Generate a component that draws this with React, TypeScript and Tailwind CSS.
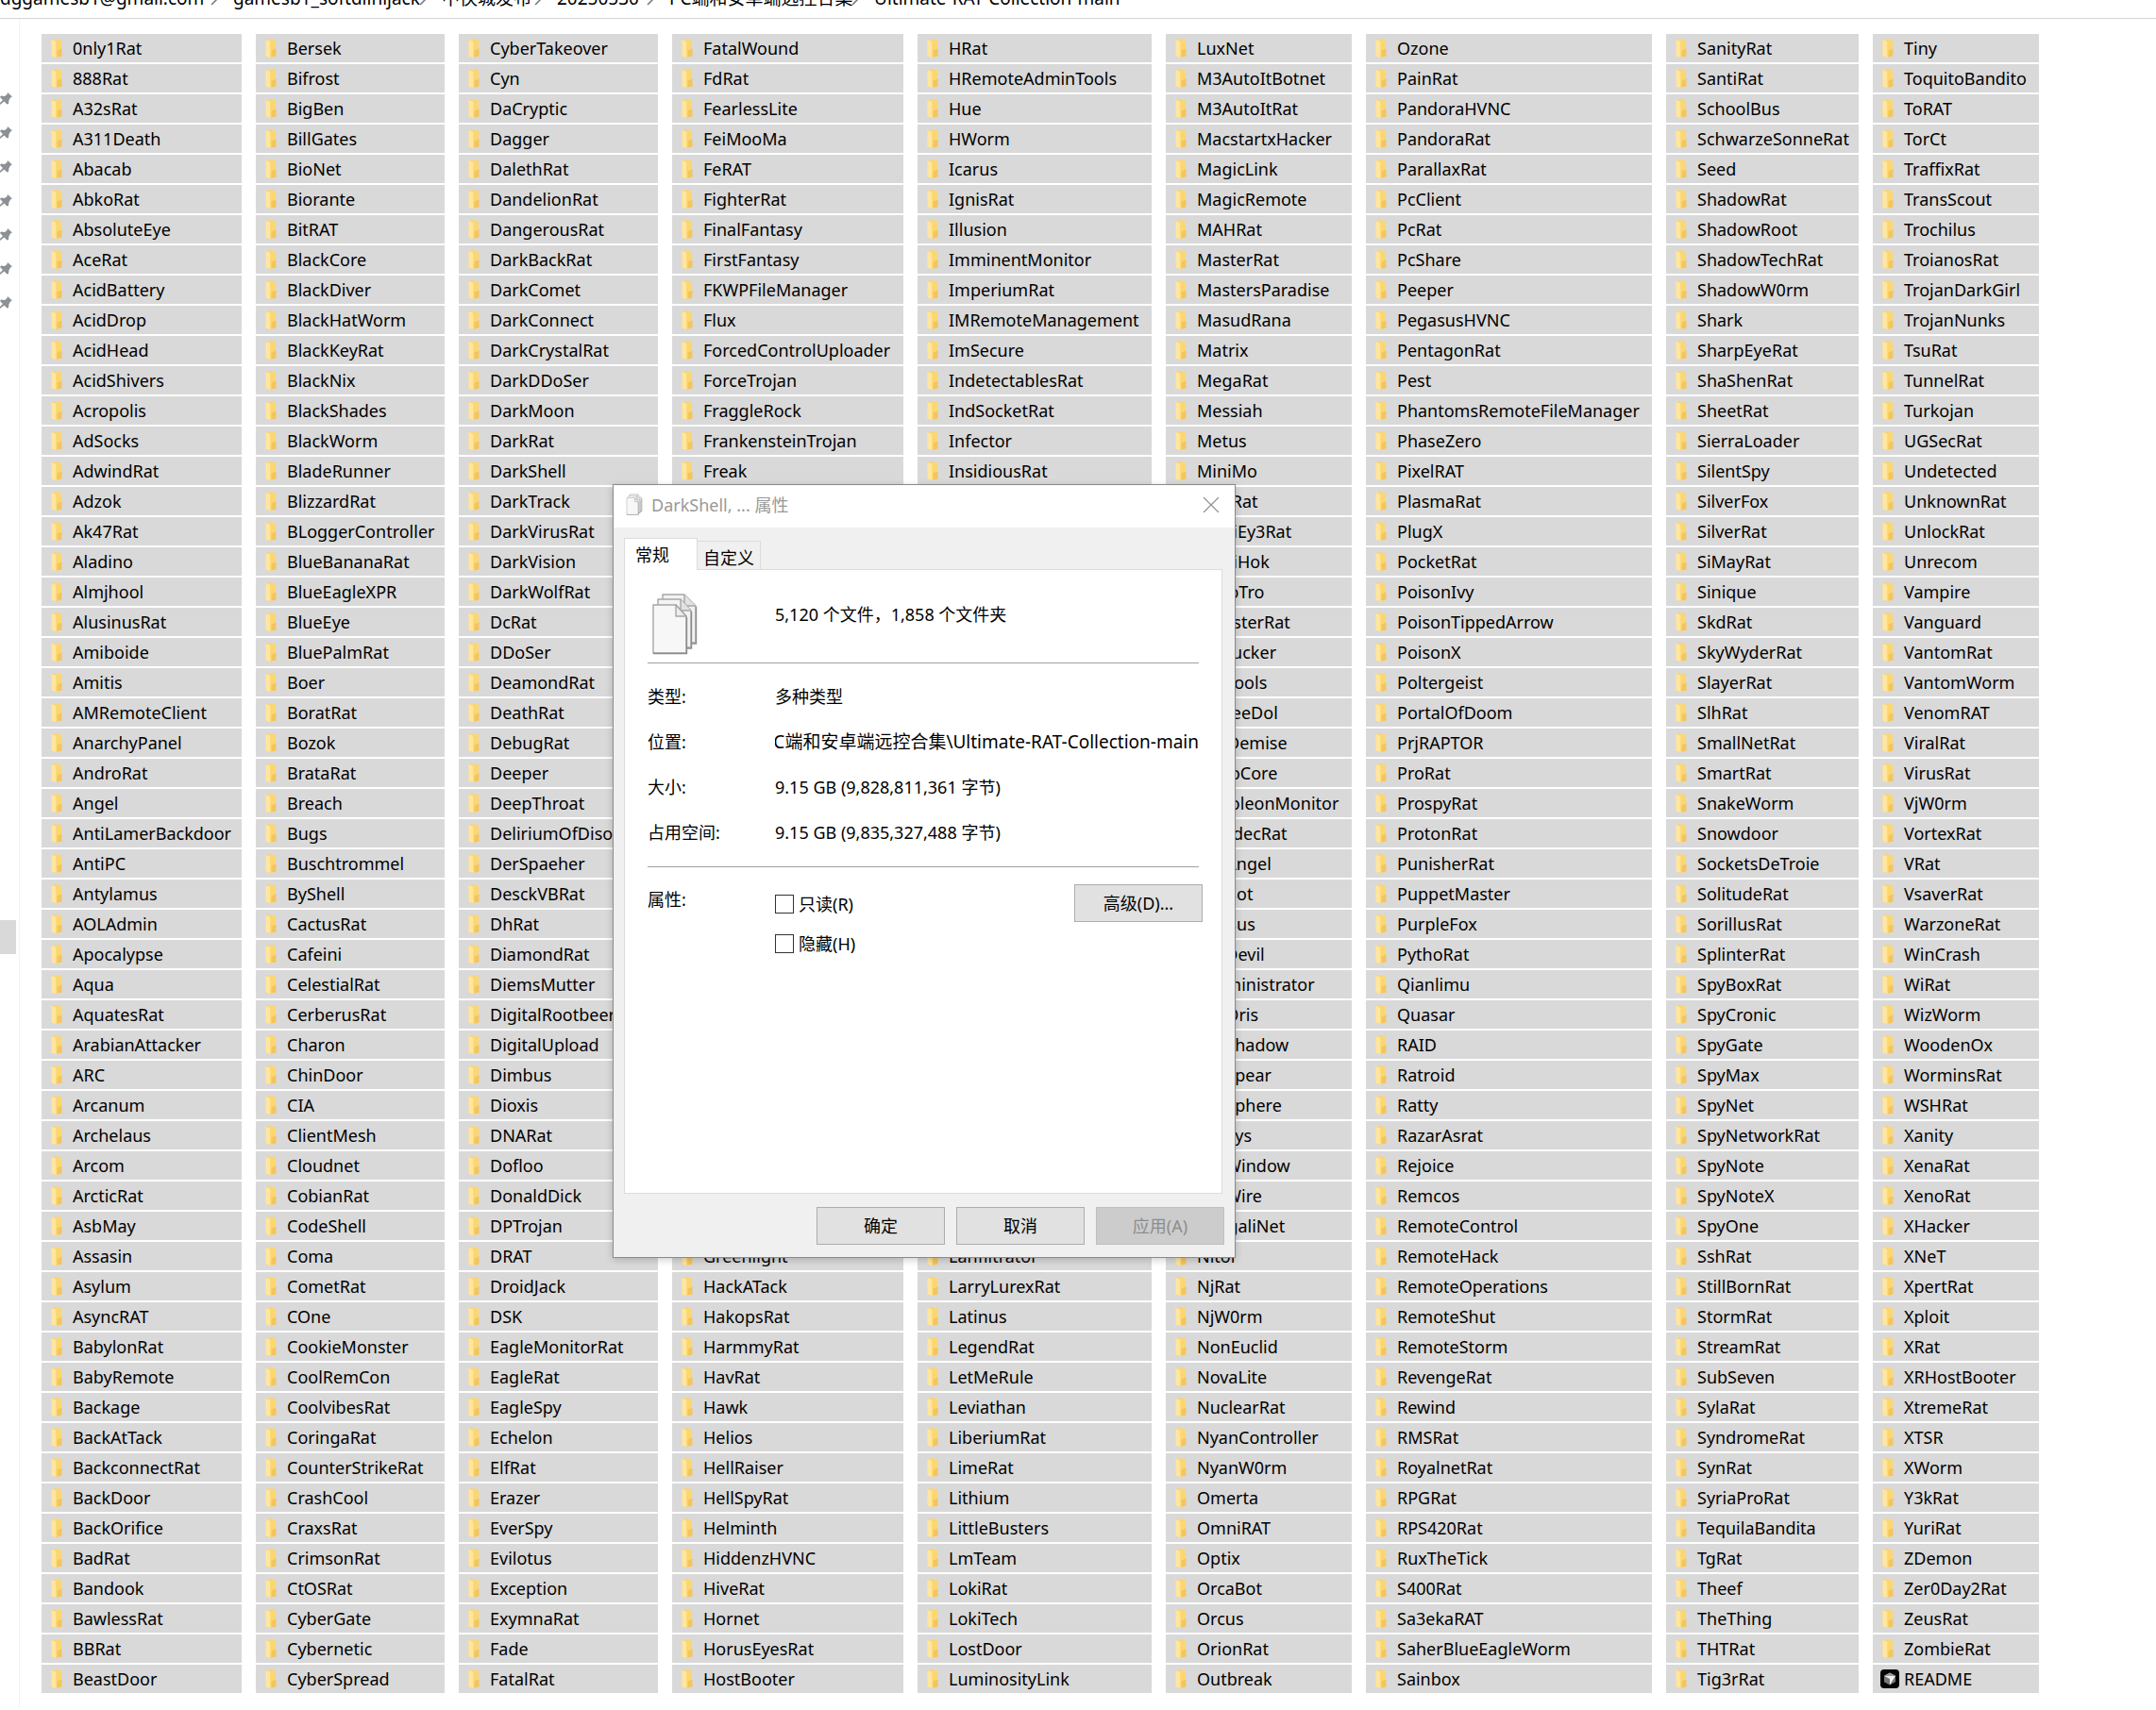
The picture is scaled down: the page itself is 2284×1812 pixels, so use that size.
import React from "react";

// Rows that sit completely behind the properties window carry no label
const covered = Array(25).fill("");

const columns = [
  {
    width: "w-[212px]",
    names:
      "0nly1Rat 888Rat A32sRat A311Death Abacab AbkoRat AbsoluteEye AceRat AcidBattery AcidDrop AcidHead AcidShivers Acropolis AdSocks AdwindRat Adzok Ak47Rat Aladino Almjhool AlusinusRat Amiboide Amitis AMRemoteClient AnarchyPanel AndroRat Angel AntiLamerBackdoor AntiPC Antylamus AOLAdmin Apocalypse Aqua AquatesRat ArabianAttacker ARC Arcanum Archelaus Arcom ArcticRat AsbMay Assasin Asylum AsyncRAT BabylonRat BabyRemote Backage BackAtTack BackconnectRat BackDoor BackOrifice BadRat Bandook BawlessRat BBRat BeastDoor".split(" "),
  },
  {
    width: "w-[200px]",
    names:
      "Bersek Bifrost BigBen BillGates BioNet Biorante BitRAT BlackCore BlackDiver BlackHatWorm BlackKeyRat BlackNix BlackShades BlackWorm BladeRunner BlizzardRat BLoggerController BlueBananaRat BlueEagleXPR BlueEye BluePalmRat Boer BoratRat Bozok BrataRat Breach Bugs Buschtrommel ByShell CactusRat Cafeini CelestialRat CerberusRat Charon ChinDoor CIA ClientMesh Cloudnet CobianRat CodeShell Coma CometRat COne CookieMonster CoolRemCon CoolvibesRat CoringaRat CounterStrikeRat CrashCool CraxsRat CrimsonRat CtOSRat CyberGate Cybernetic CyberSpread".split(" "),
  },
  {
    width: "w-[211px]",
    names:
      "CyberTakeover Cyn DaCryptic Dagger DalethRat DandelionRat DangerousRat DarkBackRat DarkComet DarkConnect DarkCrystalRat DarkDDoSer DarkMoon DarkRat DarkShell DarkTrack DarkVirusRat DarkVision DarkWolfRat DcRat DDoSer DeamondRat DeathRat DebugRat Deeper DeepThroat DeliriumOfDisorder DerSpaeher DesckVBRat DhRat DiamondRat DiemsMutter DigitalRootbeer DigitalUpload Dimbus Dioxis DNARat Dofloo DonaldDick DPTrojan DRAT DroidJack DSK EagleMonitorRat EagleRat EagleSpy Echelon ElfRat Erazer EverSpy Evilotus Exception ExymnaRat Fade FatalRat".split(" "),
  },
  {
    width: "w-[245px]",
    names: [
      ..."FatalWound FdRat FearlessLite FeiMooMa FeRAT FighterRat FinalFantasy FirstFantasy FKWPFileManager Flux ForcedControlUploader ForceTrojan FraggleRock FrankensteinTrojan Freak".split(" "),
      ...covered,
      ..."Greenlight HackATack HakopsRat HarmmyRat HavRat Hawk Helios HellRaiser HellSpyRat Helminth HiddenzHVNC HiveRat Hornet HorusEyesRat HostBooter".split(" "),
    ],
  },
  {
    width: "w-[248px]",
    names: [
      ..."HRat HRemoteAdminTools Hue HWorm Icarus IgnisRat Illusion ImminentMonitor ImperiumRat IMRemoteManagement ImSecure IndetectablesRat IndSocketRat Infector InsidiousRat".split(" "),
      ...covered,
      ..."Lanfiltrator LarryLurexRat Latinus LegendRat LetMeRule Leviathan LiberiumRat LimeRat Lithium LittleBusters LmTeam LokiRat LokiTech LostDoor LuminosityLink".split(" "),
    ],
  },
  {
    width: "w-[197px]",
    names:
      "LuxNet M3AutoItBotnet M3AutoItRat MacstartxHacker MagicLink MagicRemote MAHRat MasterRat MastersParadise MasudRana Matrix MegaRat Messiah Metus MiniMo MiniRat ModiEy3Rat ModiHok MofoTro MonsterRat MoSucker MwTools MuFeeDol MytDemise NanoCore NapoleonMonitor NawdecRat NetAngel NetBot NetBus NetDevil Netministrator NetOris NetShadow NetSpear NetSphere NetSys NetWindow NetWire NasgaliNet Nitol NjRat NjW0rm NonEuclid NovaLite NuclearRat NyanController NyanW0rm Omerta OmniRAT Optix OrcaBot Orcus OrionRat Outbreak".split(" "),
  },
  {
    width: "w-[303px]",
    names:
      "Ozone PainRat PandoraHVNC PandoraRat ParallaxRat PcClient PcRat PcShare Peeper PegasusHVNC PentagonRat Pest PhantomsRemoteFileManager PhaseZero PixelRAT PlasmaRat PlugX PocketRat PoisonIvy PoisonTippedArrow PoisonX Poltergeist PortalOfDoom PrjRAPTOR ProRat ProspyRat ProtonRat PunisherRat PuppetMaster PurpleFox PythoRat Qianlimu Quasar RAID Ratroid Ratty RazarAsrat Rejoice Remcos RemoteControl RemoteHack RemoteOperations RemoteShut RemoteStorm RevengeRat Rewind RMSRat RoyalnetRat RPGRat RPS420Rat RuxTheTick S400Rat Sa3ekaRAT SaherBlueEagleWorm Sainbox".split(" "),
  },
  {
    width: "w-[204px]",
    names:
      "SanityRat SantiRat SchoolBus SchwarzeSonneRat Seed ShadowRat ShadowRoot ShadowTechRat ShadowW0rm Shark SharpEyeRat ShaShenRat SheetRat SierraLoader SilentSpy SilverFox SilverRat SiMayRat Sinique SkdRat SkyWyderRat SlayerRat SlhRat SmallNetRat SmartRat SnakeWorm Snowdoor SocketsDeTroie SolitudeRat SorillusRat SplinterRat SpyBoxRat SpyCronic SpyGate SpyMax SpyNet SpyNetworkRat SpyNote SpyNoteX SpyOne SshRat StillBornRat StormRat StreamRat SubSeven SylaRat SyndromeRat SynRat SyriaProRat TequilaBandita TgRat Theef TheThing THTRat Tig3rRat".split(" "),
  },
  {
    width: "w-[176px]",
    names:
      "Tiny ToquitoBandito ToRAT TorCt TraffixRat TransScout Trochilus TroianosRat TrojanDarkGirl TrojanNunks TsuRat TunnelRat Turkojan UGSecRat Undetected UnknownRat UnlockRat Unrecom Vampire Vanguard VantomRat VantomWorm VenomRAT ViralRat VirusRat VjW0rm VortexRat VRat VsaverRat WarzoneRat WinCrash WiRat WizWorm WoodenOx WorminsRat WSHRat Xanity XenaRat XenoRat XHacker XNeT XpertRat Xploit XRat XRHostBooter XtremeRat XTSR XWorm Y3kRat YuriRat ZDemon Zer0Day2Rat ZeusRat ZombieRat README".split(" "),
  },
];

const crumbs = [
  { label: "dggamesb1@gmail.com", width: "w-[247px]" },
  { label: "gamesb1_softdlinijack", width: "w-[221px]" },
  { label: "中侠城发布", width: "w-[122px]" },
  { label: "20250530", width: "w-[119px]" },
  { label: "PC端和安卓端远控合集", width: "w-[217px]" },
  { label: "Ultimate-RAT-Collection-main", width: "w-auto" },
];

const details = [
  { label: "类型:", value: "多种类型" },
  { label: "位置:", value: "PC端和安卓端远控合集\\Ultimate-RAT-Collection-main", path: true },
  { label: "大小:", value: "9.15 GB (9,828,811,361 字节)" },
  { label: "占用空间:", value: "9.15 GB (9,835,327,488 字节)" },
];

const FolderIcon = () => (
  <svg className="h-5 w-5 shrink-0" viewBox="0 0 20 20" aria-hidden="true">
    <path d="M2.5 1 L6 0 L13 1 V18 L8 20 L2.5 18.5Z" fill="#f7d682" />
    <path d="M2.5 1 L7.5 3 V20 L2.5 18.5Z" fill="#ffe6a0" />
    <path d="M7.5 3 L9 1.5 H13 V11 L12.5 12 V18.5 L7.5 20Z" fill="#fcd66f" />
    <path d="M8.5 12.5 L13.5 10.5 V18.5 L8.5 19.5Z" fill="#f3c55f" />
  </svg>
);

const ReadmeIcon = () => (
  <svg className="h-5 w-5 shrink-0" viewBox="0 0 20 20" aria-hidden="true">
    <rect width="20" height="20" rx="4" fill="#050505" />
    <path d="M10 3.5 L16 6.8 V13.2 L10 16.5 L4 13.2 V6.8Z" fill="#777" />
    <path d="M4 6.8 H16 L10 16.5 V10Z" fill="#f1f1f1" />
    <path d="M4 6.8 L10 3.5 L16 6.8Z" fill="#9b9b9b" />
  </svg>
);

const PinIcon = () => (
  <svg className="h-4 w-[13px]" viewBox="0 0 13 16" aria-hidden="true">
    <path d="M8 1 L13 5.5 L11.5 6 L9.5 9 L9 13 L7.5 13.5 L4.5 10.5 L0 14 V12 L3 9 L0 6 L1 4.5 L5 5 L7.5 3Z" fill="#8b9196" />
  </svg>
);

const FilesIcon = ({ className }: { className: string }) => (
  <svg className={className} viewBox="0 0 48 66" aria-hidden="true">
    <g stroke="#a6a6a6" strokeWidth="1.4" strokeLinejoin="round">
      <path d="M11 2 H34 L46 14 V53 H11Z" fill="#f2f2f2" />
      <path d="M34 2 V14 H46" fill="#e2e2e2" />
      <path d="M6 7 H30 L41 19 V58 H6Z" fill="#f4f4f4" />
      <path d="M30 7 V19 H41" fill="#e2e2e2" />
      <path d="M1 13 H25 L36 25 V64 H1Z" fill="#f7f7f7" />
      <path d="M25 13 V25 H36Z" fill="#ececec" />
    </g>
    <path d="M1 64.5 H36.5 V26 M36.5 59 H41.5 V20 M41.5 54 H46.5 V15" fill="none" stroke="#8c8c8c" strokeWidth="1.4" />
  </svg>
);

const Breadcrumb = () => (
  <nav className="flex h-5 items-end overflow-hidden border-b border-[#d4d4d4] text-[19px] leading-7 whitespace-nowrap">
    {crumbs.map((crumb, i) => (
      <div key={crumb.label} className={`${crumb.width} flex shrink-0 pb-[7px]`}>
        <a href="#" className="min-w-0 flex-1">
          {crumb.label}
        </a>
        {i < crumbs.length - 1 && (
          <svg className="mr-4 h-7 w-2 shrink-0" viewBox="0 0 8 28" fill="none" stroke="#777" strokeWidth="1.5" aria-hidden="true">
            <path d="M1 11 L6 16 L1 21" />
          </svg>
        )}
      </div>
    ))}
  </nav>
);

const Sidebar = () => (
  <aside className="w-[21px] shrink-0 border-r border-[#f3f3f3] pt-[67px]">
    {Array.from({ length: 7 }, (_, i) => (
      <div key={i} className="flex h-9 items-center">
        <PinIcon />
      </div>
    ))}
    <div className="mt-[636px] h-9 w-[17px] bg-[#d9d9d9]" />
  </aside>
);

const FileList = () => (
  <main className="flex gap-[15px] pt-4 pb-4 pl-[23px]">
    {columns.map((column) => (
      <ul key={column.names[0]} className={`${column.width} flex shrink-0 flex-col gap-0.5`}>
        {column.names.map((name, i) => (
          <li key={i} className="flex h-[30px] items-center gap-[5px] bg-[#d9d9d9] pl-2 whitespace-nowrap">
            {name === "README" ? <ReadmeIcon /> : <FolderIcon />}
            <span>{name}</span>
          </li>
        ))}
      </ul>
    ))}
  </main>
);

const PropertiesDialog = () => (
  <section
    role="dialog"
    aria-labelledby="dialog-title"
    className="absolute top-[513px] left-[649px] w-[660px] border border-[#8a8a8a] bg-[#f0f0f0] shadow-[0_2px_8px_rgba(0,0,0,0.2)]"
  >
    <header className="flex h-[45px] items-center bg-white pr-4 pb-1 pl-3 text-[#999]">
      <FilesIcon className="h-[23px] w-5" />
      <h1 id="dialog-title" className="ml-2 flex-1">
        DarkShell, ... 属性
      </h1>
      <button type="button" aria-label="关闭">
        <svg className="h-4 w-[18px]" viewBox="0 0 18 16" stroke="#8f8f8f" strokeWidth="1.2" aria-hidden="true">
          <path d="M1 0 L17 16 M17 0 L1 16" />
        </svg>
      </button>
    </header>

    <div className="pt-[11px] pr-[13px] pl-[11px]">
      <div role="tablist" className="flex h-[33px] items-end">
        <button type="button" role="tab" aria-selected="true" className="z-10 -mb-px h-[34px] w-[78px] border border-b-0 border-[#dcdcdc] bg-white pl-[11px] text-left">
          常规
        </button>
        <button type="button" role="tab" aria-selected="false" className="h-[30px] w-[67px] border border-b-0 border-l-0 border-[#dcdcdc] pt-1">
          自定义
        </button>
      </div>

      <div role="tabpanel" className="h-[662px] border border-[#dcdcdc] bg-white px-6">
        <div className="flex h-[99px] items-center border-b border-[#a0a0a0] pl-[5px]">
          <FilesIcon className="mt-4 h-[66px] w-12" />
          <p className="mb-1 ml-[82px]">5,120 个文件，1,858 个文件夹</p>
        </div>

        <dl className="h-[216px] border-b border-[#a0a0a0] pt-[11px]">
          {details.map((row) => (
            <div key={row.label} className="flex h-12 items-center">
              <dt className="w-[135px] shrink-0">{row.label}</dt>
              {row.path ? (
                <dd className="flex flex-1 justify-end overflow-hidden text-[19px] whitespace-nowrap">{row.value}</dd>
              ) : (
                <dd className="flex-1">{row.value}</dd>
              )}
            </div>
          ))}
        </dl>

        <div className="-mr-1 flex items-start pt-[18px]">
          <span className="w-[135px] pt-1">属性:</span>
          <div className="flex flex-1 flex-col gap-[14px] pt-[7px]">
            {["只读(R)", "隐藏(H)"].map((label) => (
              <label key={label} className="flex h-7 items-center gap-[5px]">
                <input type="checkbox" className="h-5 w-5 appearance-none border border-[#333] bg-white" />
                {label}
              </label>
            ))}
          </div>
          <button type="button" className="h-10 w-[136px] border border-[#adadad] bg-[#e1e1e1]">
            高级(D)...
          </button>
        </div>
      </div>
    </div>

    <footer className="flex justify-end gap-3 pt-[14px] pr-[11px] pb-[13px]">
      <button type="button" className="h-10 w-[136px] border border-[#adadad] bg-[#e1e1e1]">
        确定
      </button>
      <button type="button" className="h-10 w-[136px] border border-[#adadad] bg-[#e1e1e1]">
        取消
      </button>
      <button type="button" disabled className="h-10 w-[136px] border border-[#bfbfbf] bg-[#cccccc] text-[#8c8c8c]">
        应用(A)
      </button>
    </footer>
  </section>
);

export const App = () => (
  <div className="relative min-h-screen overflow-hidden bg-white font-['Noto_Sans','Noto_Sans_CJK_SC',sans-serif] text-[18px] leading-6 text-black">
    <Breadcrumb />
    <div className="flex">
      <Sidebar />
      <FileList />
    </div>
    <PropertiesDialog />
  </div>
);

export default App;
